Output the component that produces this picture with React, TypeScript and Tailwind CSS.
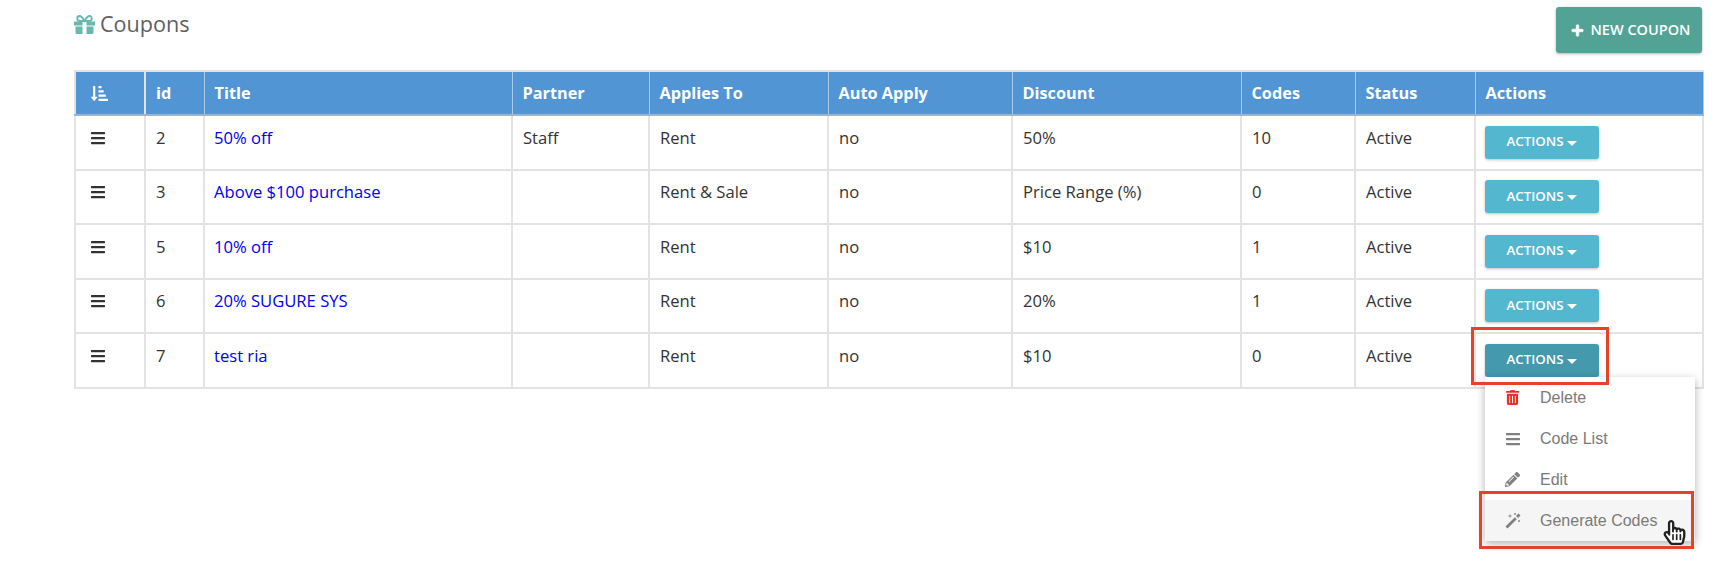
import { FaBars, FaPencilAlt, FaPlus, FaHandPointer, FaRegHandPointer, FaSortAmountDownAlt, FaTrashAlt } from 'react-icons/fa';

type Coupon = {
  id: number;
  title: string;
  partner: string;
  applies: string;
  discount: string;
  codes: number;
};

const coupons: Coupon[] = [
  { id: 2, title: '50% off', partner: 'Staff', applies: 'Rent', discount: '50%', codes: 10 },
  { id: 3, title: 'Above $100 purchase', partner: '', applies: 'Rent & Sale', discount: 'Price Range (%)', codes: 0 },
  { id: 5, title: '10% off', partner: '', applies: 'Rent', discount: '$10', codes: 1 },
  { id: 6, title: '20% SUGURE SYS', partner: '', applies: 'Rent', discount: '20%', codes: 1 },
  { id: 7, title: 'test ria', partner: '', applies: 'Rent', discount: '$10', codes: 0 },
];

const heads = ['id', 'Title', 'Partner', 'Applies To', 'Auto Apply', 'Discount', 'Codes', 'Status', 'Actions'];
const td = 'border-2 border-[#e3e3e3] px-[10px] pt-[9.5px] align-top h-[54.6px]';

const GiftIcon = () => (
  <svg width="21" height="19" viewBox="0 0 21 19" className="text-[#68b8ad]">
    <path fill="currentColor" d="M0 6.5h8.5v4H0zM12.5 6.5H21v4h-8.5zM1.5 11.5h7V19h-5.5a1.5 1.5 0 0 1-1.5-1.5zM12.5 11.5h7v6a1.5 1.5 0 0 1-1.5 1.5h-5.5z" />
    <path fill="none" stroke="currentColor" strokeWidth="1.8" d="M10.5 6C8.5 2.5 7 1 5.5 1 4 1 3.2 2.2 3.2 3.4 3.2 5 4.5 6 6 6h9c1.500 0 2.800-1 2.800-2.600C17.800 2.200 17 1 15.500 1 14 1 12.500 2.500 10.500 6z" />
  </svg>
);

const WandIcon = () => (
  <svg width="16" height="16" viewBox="0 0 16 16" className="text-[#808080]">
    <path fill="none" stroke="currentColor" strokeWidth="2.800" d="M1.500 14.500 10.800 5.200" />
    <path fill="none" stroke="currentColor" strokeWidth="2.800" d="M12 4l2.500-2.500" />
    <path fill="none" stroke="currentColor" strokeWidth="0.900" d="M5 1.500v3M3.500 3h3M10 0v2M9 1h2M14 7v2M13 8h2" />
  </svg>
);

const ActionsButton = ({ active }: { active?: boolean }) => (
  <div className={`-ml-[1px] flex h-[33px] w-[114px] items-center justify-center gap-[4px] rounded-[3px] text-[13.300px] font-semibold text-white shadow-[0_1px_3px_rgba(0,0,0,0.25)] ${active ? 'bg-[#4499ad]' : 'bg-[#54b7d0]'}`}>
    ACTIONS
    <span className="mt-[2px] border-x-[5px] border-t-[5px] border-x-transparent border-t-white" />
  </div>
);

const MenuItem = ({ icon, label, hover }: { icon: React.ReactNode; label: string; hover?: boolean }) => (
  <div className={`flex h-[41px] items-center font-['Liberation_Sans',sans-serif] text-[16px] text-[#7a7a7a] ${hover ? 'bg-[#f5f5f5]' : ''}`}>
    <span className="flex w-[55px] justify-center">{icon}</span>
    <span>{label}</span>
  </div>
);

export default function App(): JSX.Element {
  return (
    <div className="relative h-[562px] overflow-hidden bg-white pl-[74px] pr-[24px] font-['Open_Sans',sans-serif] text-[16.600px] text-[#333]">
      <div className="flex h-[71px] items-start justify-between">
        <h1 className="mt-[10px] flex items-center gap-[5px] text-[21.600px] leading-[28px] text-[#5f5f5f]">
          <GiftIcon />
          Coupons
        </h1>
        <button className="mt-[7px] flex h-[46px] w-[146px] items-center justify-center gap-[7px] rounded-[3px] bg-[#52a396] pl-[3px] text-[14.500px] font-semibold text-white shadow-[0_1px_3px_rgba(0,0,0,0.3)]">
          <FaPlus className="stroke-[30] text-[13px]" />
          NEW COUPON
        </button>
      </div>

      <table className="-mt-[1px] w-[1628px] table-fixed border-collapse">
        <colgroup>
          <col className="w-[70px]" />
          <col className="w-[59px]" />
          <col className="w-[308px]" />
          <col className="w-[137px]" />
          <col className="w-[179px]" />
          <col className="w-[184px]" />
          <col className="w-[229px]" />
          <col className="w-[114px]" />
          <col className="w-[120px]" />
          <col className="w-[228px]" />
        </colgroup>
        <thead>
          <tr className="h-[44px] bg-[#5295d5] text-left text-[16.300px] font-bold text-white">
            <th className="border-2 border-t-[#e3e3e3] border-x-[#e3e3e3] border-b-[#8db8e2] pl-[15px]">
              <FaSortAmountDownAlt className="text-[17px]" />
            </th>
            {heads.map(h => (
              <th key={h} className="border border-[#a9cbec] border-t-2 border-t-[#e3e3e3] border-b-2 border-b-[#8db8e2] px-[10px] first:border-l-2 first:border-l-[#e3e3e3]">{h}</th>
            ))}
          </tr>
        </thead>
        <tbody>
          {coupons.map((c, i) => (
            <tr key={c.id}>
              <td className={`${td} pl-[14px]`}><FaBars className="mt-[4px] text-[16px] text-[#333]" /></td>
              <td className={td}>{c.id}</td>
              <td className={`${td} pl-[9px] text-[#0000ee]`}>{c.title}</td>
              <td className={td}>{c.partner}</td>
              <td className={td}>{c.applies}</td>
              <td className={td}>no</td>
              <td className={td}>{c.discount}</td>
              <td className={td}>{c.codes}</td>
              <td className={td}>Active</td>
              <td className={td}><ActionsButton active={i === 4} /></td>
            </tr>
          ))}
        </tbody>
      </table>

      <div className="absolute left-[1485px] top-[377px] w-[210px] rounded-b-[3px] bg-white shadow-[0_3px_10px_rgba(0,0,0,0.3)]">
        <MenuItem icon={<FaTrashAlt className="text-[15px] text-[#e5322a]" />} label="Delete" />
        <MenuItem icon={<FaBars className="text-[16px] text-[#808080]" />} label="Code List" />
        <MenuItem icon={<FaPencilAlt className="text-[15px] text-[#808080]" />} label="Edit" />
        <MenuItem icon={<WandIcon />} label="Generate Codes" hover />
      </div>

      <div className="absolute left-[1471px] top-[327px] h-[58px] w-[138px] border-[3px] border-[#e8412a]" />
      <div className="absolute left-[1479px] top-[491px] h-[58px] w-[215px] border-[3px] border-[#e8412a]" />
      <FaHandPointer className="absolute left-[1662px] top-[520px] text-[25px] text-white" />
      <FaRegHandPointer className="absolute left-[1662px] top-[520px] text-[25px] text-[#222]" />
    </div>
  );
}
